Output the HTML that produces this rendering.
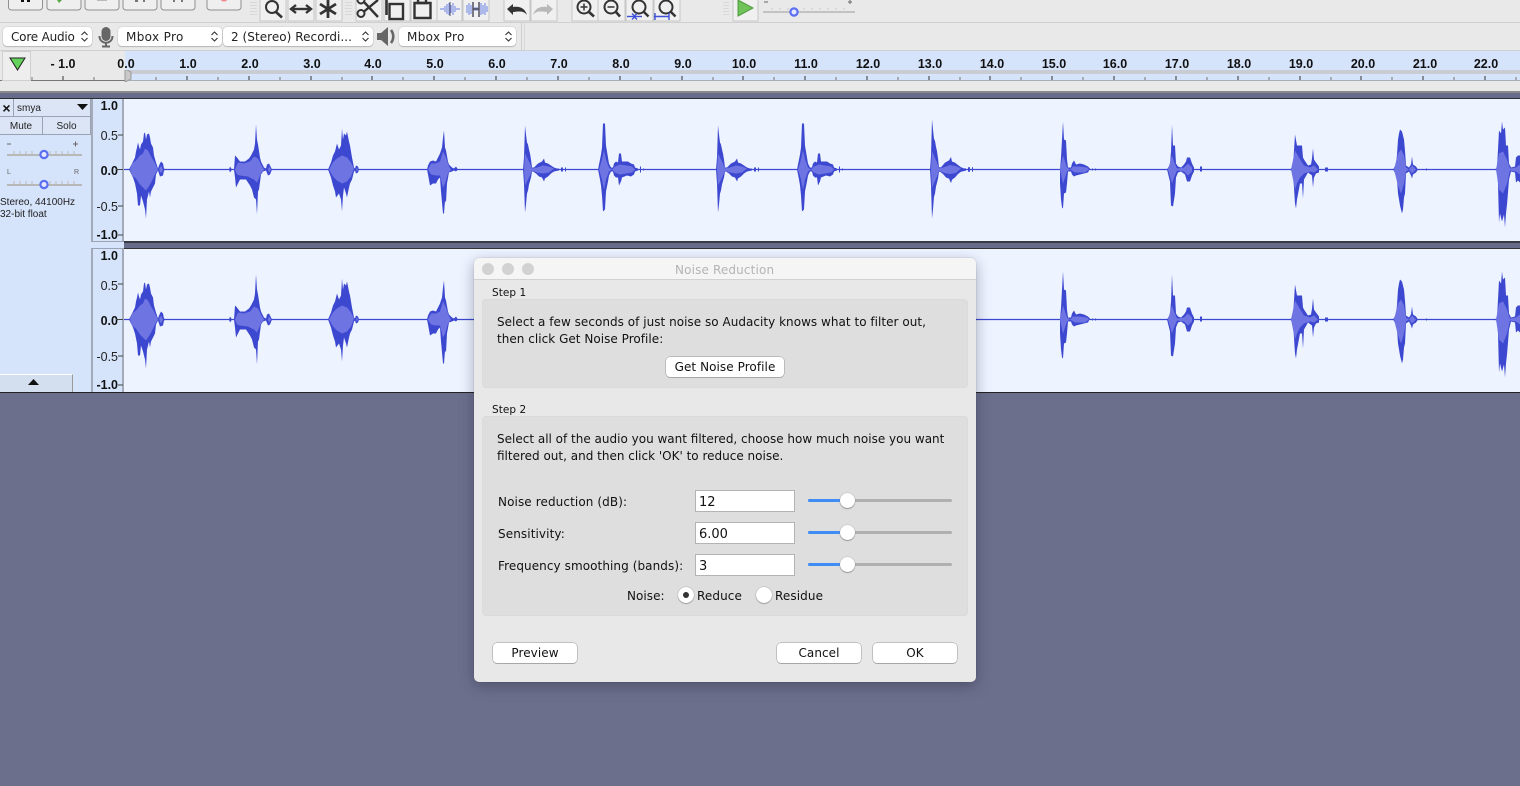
<!DOCTYPE html>
<html><head><meta charset="utf-8"><title>Noise Reduction</title>
<style>
html,body{margin:0;padding:0}
body{width:1520px;height:786px;position:relative;overflow:hidden;background:#6b6f8c;font-family:"DejaVu Sans","Liberation Sans",sans-serif;color:#111}
.a{position:absolute}
.sel{position:absolute;top:27px;height:19px;background:#fff;border-radius:4px;box-shadow:0 0 1px #999,0 1px 1px #bbb;font-size:12px;line-height:20px;padding-left:8px;box-sizing:border-box;white-space:nowrap;color:#222}
.sel svg{position:absolute;right:3px;top:3px}
.rl{position:absolute;top:57px;font:bold 12.5px "Liberation Sans",sans-serif;color:#111;transform:translateX(-50%);white-space:nowrap}
.vr{position:absolute;width:27px;left:91px;text-align:right;font:12.5px/14px "Liberation Sans",sans-serif;color:#222}
.vr.b{font-weight:bold;color:#111}
.t{position:absolute;font-size:12px;line-height:15px;white-space:nowrap;color:#111;letter-spacing:.05px}
.btn{position:absolute;background:#fff;border-radius:4px;box-shadow:0 0 0 .5px #999,0 1px 0 #b5b5b5;font-size:12px;letter-spacing:.07px;line-height:20px;text-align:center;color:#111;height:20px}
.inp{position:absolute;left:695px;width:100px;height:22px;box-sizing:border-box;background:#fff;border:1px solid #b4b4b4;font-size:13px;line-height:24px;padding-left:3px;color:#111}
.track{position:absolute;left:808px;width:144px;height:3px;background:#b0b0b0;border-radius:2px}
.track i{position:absolute;left:0;top:0;width:34px;height:3px;background:#3f8cf5;border-radius:2px}
.thumb{position:absolute;left:840px;width:15px;height:15px;border-radius:50%;background:#fff;box-shadow:0 0 1px #777,0 1px 1px #999}
.radio{position:absolute;width:16px;height:16px;border-radius:50%;background:#fff;box-shadow:0 0 1px #666,0 1px 1px #aaa}
.group{position:absolute;left:482px;width:486px;background:#dedede;border:1px solid #dadada;box-sizing:border-box;border-radius:4px}
.pb{position:absolute;background:#dbe5f6;border-right:1px solid #9aa3b5;border-bottom:1px solid #9aa3b5;box-sizing:border-box;font:10px/18px "Liberation Sans",sans-serif;text-align:center;color:#222}
</style></head><body>

<!-- toolbars background -->
<div class="a" style="left:0;top:0;width:1520px;height:93px;background:#e9e9e9"></div>
<div class="a" style="left:0;top:22px;width:1520px;height:1px;background:#d0d0d0"></div>
<div class="a" style="left:521px;top:23px;width:1px;height:27px;background:#cfcfcf"></div>
<div class="a" style="left:524px;top:23px;width:1px;height:27px;background:#d8d8d8"></div>
<div class="a" style="left:0;top:50px;width:1520px;height:1px;background:#d0d0d0"></div>

<svg class="a" style="left:0;top:0" width="1520" height="23" viewBox="0 0 1520 23">
<g fill="#efefef" stroke="#8f8f8f" stroke-width="1">
<rect x="8.500" y="-8" width="34" height="18" rx="3"/><rect x="47" y="-8" width="34" height="18" rx="3"/><rect x="85" y="-8" width="34" height="18" rx="3"/><rect x="123" y="-8" width="34" height="18" rx="3"/><rect x="161" y="-8" width="34" height="18" rx="3"/><rect x="207" y="-8" width="34" height="18" rx="3"/>
</g>
<rect x="21" y="0" width="3" height="2" fill="#111"/><rect x="27" y="0" width="3" height="2" fill="#111"/>
<path d="M57 0h5l-3 3z" fill="#5aa845"/><rect x="97" y="0" width="10" height="1" fill="#bbb"/>
<path d="M135 0h3v2h-3zM143 0h2v2h-2z" fill="#777"/><path d="M173 0h2v2h-2zM181 0h2v2h-2z" fill="#777"/>
<ellipse cx="224" cy="0" rx="3" ry="1.500" fill="#ef8a8a"/>
<g fill="#d8d8d8"><rect x="250" y="2" width="7" height="1"/><rect x="250" y="5" width="7" height="1"/><rect x="250" y="8" width="7" height="1"/><rect x="250" y="11" width="7" height="1"/><rect x="250" y="14" width="7" height="1"/><rect x="345" y="2" width="7" height="1"/><rect x="345" y="5" width="7" height="1"/><rect x="345" y="8" width="7" height="1"/><rect x="345" y="11" width="7" height="1"/><rect x="345" y="14" width="7" height="1"/><rect x="723" y="2" width="6" height="1"/><rect x="723" y="5" width="6" height="1"/><rect x="723" y="8" width="6" height="1"/><rect x="723" y="11" width="6" height="1"/><rect x="723" y="14" width="6" height="1"/></g>
<g fill="#f0f0f0" stroke="#c6c6c6">
<rect x="260" y="-4" width="26" height="25"/><rect x="288" y="-4" width="26" height="25"/><rect x="316" y="-4" width="26" height="25"/>
<rect x="356" y="-4" width="26" height="25"/><rect x="384" y="-4" width="26" height="25"/><rect x="411" y="-4" width="26" height="25"/><rect x="437" y="-4" width="25" height="25"/><rect x="463" y="-4" width="26" height="25"/>
<rect x="504" y="-4" width="26" height="25"/><rect x="531" y="-4" width="26" height="25"/>
<rect x="572" y="-4" width="26" height="25"/><rect x="598" y="-4" width="27" height="25"/><rect x="626" y="-4" width="27" height="25"/><rect x="654" y="-4" width="26" height="25"/>
<rect x="733" y="-4" width="25" height="25"/>
</g>
<g fill="none" stroke="#333" stroke-width="2">
<circle cx="272" cy="7" r="6"/><path d="M276 12l6 5.500" stroke-width="2.600"/>
<path d="M293 9h16" stroke-width="2.400"/><path d="M296 5l-5 4 5 4M306 5l5 4-5 4" stroke-width="2.400"/>
<path d="M328 0v18M320 4l16 10M336 4l-16 10" stroke-width="2.800"/>
<circle cx="361" cy="13.500" r="3.500"/><circle cx="361" cy="0" r="3.500"/><path d="M364 11.500L378 0M364 2L378 17" stroke-width="2.400"/>
<path d="M386.500 0v15" stroke-width="2.600"/><rect x="389.500" y="4" width="13.500" height="15" stroke-width="2.400"/>
<path d="M414.500 3v15h16v-15z" stroke-width="2.400"/><path d="M418 -1v4h8v-4" stroke-width="2.400"/>
<circle cx="584" cy="7" r="6.500"/><path d="M589 12l5 4.500" stroke-width="2.600"/><path d="M580.500 7h7M584 3.500v7" stroke-width="1.500"/>
<circle cx="611" cy="7" r="6.500"/><path d="M616 12l4 4.500" stroke-width="2.600"/><path d="M607.500 7h7" stroke-width="1.500"/>
<circle cx="639" cy="7" r="6.500"/><path d="M644 12l4.500 4.500" stroke-width="2.400"/>
<circle cx="666" cy="7" r="6.500"/><path d="M671 12l4.500 4.500" stroke-width="2.400"/>
</g>
<path d="M507 9l6-5v3c8-1 12 2 14 8-3-4-7-4-14-3v3z" fill="#333"/>
<path d="M553 9l-6-5v3c-8-1-12 2-14 8 3-4 7-4 14-3v3z" fill="#b8b8b8"/>
<g stroke="#3e50d8" stroke-width="1.400" fill="none"><path d="M627 16.500h15"/><path d="M632 13.500l3 3-3 3M637 13.500l-3 3 3 3"/><path d="M654 16.500h15M655 13v7M669 13v7"/></g>
<g stroke="#6a82e4" fill="none" stroke-width="1"><path d="M440 9h4M456 9h4M445 6v6M447 4v10M449 3v12M451 5v8M453 3v12M455 6v6"/><path d="M467 5v8M469 3v12M471 5v9M475 7v4M477 7v4M481 3v12M483 5v9M485 3v12M487 6v6"/></g>
<path d="M450 2v14" stroke="#667" stroke-width="1.200"/><path d="M473 2v15M479 2v15M473 9h6" stroke="#445" stroke-width="1.400" fill="none"/>
<path d="M738 0v16l15-8z" fill="#6fc35a" stroke="#4f9a3f"/>
<path d="M763 12h92" stroke="#c2c2c2" stroke-width="2"/><path d="M764 2h4" stroke="#666"/><path d="M848 2h4M850 0v4" stroke="#666"/>
<g stroke="#ccc"><path d="M772 8v2M780 8v2M788 8v2M804 8v2M812 8v2M820 8v2M828 8v2M836 8v2M844 8v2"/></g>
<circle cx="794" cy="12" r="3.600" fill="#e6e8ff" stroke="#5b6ff0" stroke-width="2.200"/>
</svg>

<!-- selectors -->
<div class="sel" style="left:3px;width:89px;letter-spacing:-.2px">Core Audio<svg width="9" height="13"><path d="M1.500 5L4.500 2L7.500 5M1.500 8L4.500 11L7.500 8" fill="none" stroke="#333" stroke-width="1.100"/></svg></div>
<div class="sel" style="left:118px;width:104px;letter-spacing:.35px">Mbox Pro<svg width="9" height="13"><path d="M1.500 5L4.500 2L7.500 5M1.500 8L4.500 11L7.500 8" fill="none" stroke="#333" stroke-width="1.100"/></svg></div>
<div class="sel" style="left:223px;width:150px;letter-spacing:.05px">2 (Stereo) Recordi...<svg width="9" height="13"><path d="M1.500 5L4.500 2L7.500 5M1.500 8L4.500 11L7.500 8" fill="none" stroke="#333" stroke-width="1.100"/></svg></div>
<div class="sel" style="left:399px;width:117px;letter-spacing:.35px">Mbox Pro<svg width="9" height="13"><path d="M1.500 5L4.500 2L7.500 5M1.500 8L4.500 11L7.500 8" fill="none" stroke="#333" stroke-width="1.100"/></svg></div>
<svg class="a" style="left:98px;top:26px" width="16" height="22"><rect x="3.500" y="1" width="9" height="14" rx="4.500" fill="#666"/><path d="M1.500 10c0 9 13 9 13 0M8 16v4M4 20.500h8" fill="none" stroke="#666" stroke-width="2"/></svg>
<svg class="a" style="left:376px;top:25px" width="22" height="23"><path d="M1 8h4l7-6v19l-7-6H1z" fill="#666"/><path d="M15 5c3 4 3 9 0 13" fill="none" stroke="#666" stroke-width="2.600"/></svg>

<!-- ruler -->
<div class="a" style="left:125px;top:51px;width:1395px;height:29px;background:#d5e3fb"></div>
<div class="a" style="left:125px;top:70px;width:1395px;height:4px;background:#c9ccd2"></div>
<div class="a" style="left:0;top:80px;width:125px;height:1px;background:#777"></div>
<div class="a" style="left:125px;top:80px;width:1395px;height:1px;background:#a7aeba"></div>
<div class="a" style="left:0;top:91px;width:1520px;height:2px;background:#8a8a8a"></div>
<div class="a" style="left:3px;top:52px;width:27px;height:28px;background:#eee;box-shadow:0 0 0 1px #cfcfcf;box-sizing:border-box"></div>
<svg class="a" style="left:9px;top:57px" width="18" height="16"><path d="M1 1h15L8.500 13z" fill="#63d35c" stroke="#222" stroke-width="1"/></svg>
<span class="rl" style="left:63px">- 1.0</span><span class="rl" style="left:126px">0.0</span><span class="rl" style="left:188px">1.0</span><span class="rl" style="left:250px">2.0</span><span class="rl" style="left:312px">3.0</span><span class="rl" style="left:373px">4.0</span><span class="rl" style="left:435px">5.0</span><span class="rl" style="left:497px">6.0</span><span class="rl" style="left:559px">7.0</span><span class="rl" style="left:621px">8.0</span><span class="rl" style="left:683px">9.0</span><span class="rl" style="left:744px">10.0</span><span class="rl" style="left:806px">11.0</span><span class="rl" style="left:868px">12.0</span><span class="rl" style="left:930px">13.0</span><span class="rl" style="left:992px">14.0</span><span class="rl" style="left:1054px">15.0</span><span class="rl" style="left:1115px">16.0</span><span class="rl" style="left:1177px">17.0</span><span class="rl" style="left:1239px">18.0</span><span class="rl" style="left:1301px">19.0</span><span class="rl" style="left:1363px">20.0</span><span class="rl" style="left:1425px">21.0</span><span class="rl" style="left:1486px">22.0</span>
<svg class="a" style="left:0;top:70px" width="1520" height="12">
<path d="M63 6v4M187 6v4M249 6v4M311 6v4M372 6v4M434 6v4M496 6v4M558 6v4M620 6v4M682 6v4M743 6v4M805 6v4M867 6v4M929 6v4M990 6v4M1052 6v4M1114 6v4M1176 6v4M1238 6v4M1300 6v4M1361 6v4M1423 6v4M1485 6v4" stroke="#333"/>
<path d="M32 7v3M94 7v3M156 7v3M218 7v3M280 7v3M342 7v3M403 7v3M465 7v3M527 7v3M589 7v3M651 7v3M713 7v3M774 7v3M836 7v3M898 7v3M960 7v3M1021 7v3M1083 7v3M1145 7v3M1207 7v3M1269 7v3M1331 7v3M1392 7v3M1454 7v3M1516 7v3" stroke="#777"/>
<path d="M125 -1l6 3v7l-6 3z" fill="#c8c8c8" stroke="#999"/>
</svg>

<!-- tracks -->
<div class="a" style="left:0;top:93px;width:1520px;height:5px;background:#676c8a"></div>
<div class="a" style="left:0;top:98px;width:1520px;height:1px;background:#2c2c34"></div>
<div class="a" style="left:0;top:99px;width:91px;height:293px;background:#d5e3fb"></div>
<div class="a" style="left:91px;top:99px;width:33px;height:293px;background:#d5e3fb"></div>
<div class="a" style="left:91px;top:99px;width:2px;height:293px;background:#a3abba"></div>
<div class="a" style="left:122px;top:99px;width:2px;height:293px;background:#a3abba"></div>
<div class="a" style="left:124px;top:99px;width:1396px;height:143px;background:#edf3ff"></div>
<div class="a" style="left:124px;top:249px;width:1396px;height:143px;background:#edf3ff"></div>
<div class="a" style="left:124px;top:241px;width:1396px;height:8px;background:#676c8a;border-top:2px solid #3a3a44;border-bottom:1px solid #333;box-sizing:border-box"></div>
<div class="a" style="left:91px;top:241px;width:33px;height:8px;background:#d5e3fb;border-top:1px solid #9ba3b4;border-bottom:1px solid #9ba3b4;box-sizing:border-box"></div>
<div class="a" style="left:0;top:392px;width:1520px;height:1px;background:#222"></div>

<svg class="a" style="left:0;top:0" width="1520" height="400" viewBox="0 0 1520 400">
<defs>
<style>.o{fill:#3d48d0}.n{fill:#6e75e2}</style>
<g id="s5"><path class="o" d="M0 0L1-12 2-44 3-35 4-27 5-25 6-20 7-16 8-10 9-2 11-2 13-4 15-6 17-7 19-8 21-11 22-7 25-6 28-4 31-2 34-1 36-1 36 1 31 2 28 4 25 7 22 9 21 12 19 8 16 7 13 4 10 2 9 2 8 8 6 15 5 21 4 24 3 35 2 43 1 14Z"/><path class="n" d="M1 0L2-16 4-12 7-6 9-1 14-2 20-4 26-3 31-1 26 3 20 4 14 3 9 1 7 6 4 12 2 16Z"/><path class="o" d="M38-2h2V2h-2zM42-2h1V2h-1z"/></g>
<g id="s6"><path class="o" d="M0 0L2-10 3-15 4-22 5-46 7-46 8-24 10-12 11-6 13-2 15-2 16-6 18-8 20-7 21-16 23-16 24-8 27-8 30-8 33-6 36-5 37-2 40-1 40 1 37 2 36 5 33 7 29 6 24 8 23 12 21 16 20 8 18 8 16 6 15 2 13 2 11 6 10 12 8 22 7 40 5 42 4 26 3 16 2 10Z"/><path class="n" d="M1 0L4-10 6-19 8-10 11-2 14 0 17-3 22-5 28-4 34-3 37 0 34 3 28 4 22 5 17 3 14 0 11 2 8 10 6 20 4 10Z"/><path class="o" d="M42-3h1V3h-1zM45-1h1V1h-1z"/></g>
<g id="w">
<path d="M124-.6H1520V.6H124Z" class="o"/>
<path class="o" d="M129 0L131-4 133-8 135-12 136-18 137-22 138-27 139-23 140-20 141-25 143-28 144-36 145-37 146-30 147-35 149-36 150-32 151-26 153-22 154-14 156-7 158-1 159-4 161-8 163-6 164-1 166 0 164 1 163 6 160 7 158 1 156 5 155 14 153 18 151 22 150 28 149 22 147 30 146 49 145 40 143 32 141 26 140 36 138 36 137 24 135 14 133 8 131 4Z"/>
<path class="n" d="M130 0L132-6 136-9 140-14 143-16 145-21 148-19 151-13 154-8 157-2 158 0 156 3 153 9 150 15 146 21 143 18 140 15 136 9 132 6ZM159 0L161-4 163 0 161 4Z"/>
<path class="o" d="M229 0L230-3 232 0 230 3ZM234 0L235-14 237-12 240-8 245-8 249-11 251-14 254-20 255-26 256-45 257-30 258-25 260-12 261-8 264-2 266-1 267-5 269-6 271-2 272 0 270 5 268 6 266 1 263 2 261 5 259 20 258 22 257 45 256 30 254 28 252 20 250 16 246 10 240 10 238 14 236 18 235 8Z"/>
<path class="n" d="M235 0L238-7 244-6 250-8 254-13 258-11 262-3 264 0 261 4 257 13 254 10 248 7 240 6 237 5ZM268 0L269-3 271 0 269 3Z"/>
<path class="o" d="M328 0L331-7 333-14 335-18 337-26 339-20 341-24 342-41 343-30 344-36 346-34 347-38 349-28 350-24 352-12 354-2 355-1 356-4 358-3 359 0 358 3 356 4 355 1 354 2 352 10 350 14 349 18 347 28 346 24 344 18 343 26 342 42 341 30 339 24 336 28 335 22 333 16 331 8Z"/>
<path class="n" d="M329 0L333-7 337-11 342-14 347-12 351-7 354-1 351 7 347 12 342 14 337 11 333 7ZM356 0L357-2 358 0 357 2Z"/>
<path class="o" d="M427 0L428-4 430-8 433-9 436-8 438-12 440-16 442-22 443-32 444-39 445-22 446-19 448-8 449-5 452-2 454-1 456-3 458 0 456 2 454 1 452 2 449 3 447 14 446 33 445 31 444 44 443 44 441 22 440 8 438 10 436 14 433 14 430 16 428 5Z"/>
<path class="n" d="M428 0L431-6 436-6 440-8 443-18 446-12 449-3 451 0 448 4 445 14 443 18 440 6 436 6 431 5Z"/>
<use href="#s5" x="523"/><use href="#s6" x="598"/><use href="#s5" x="716"/><use href="#s6" x="797"/>
<g transform="translate(930,0) scale(1,1.14)"><use href="#s5"/></g>
<path class="o" d="M1060 0L1061-12 1062-30 1063-48 1064-30 1066-29 1067-10 1068-2 1071-2 1072-6 1074-9 1076-5 1080-6 1084-5 1088-3 1090-1 1088 3 1084 4 1080 5 1076 6 1074 7 1072 5 1071 2 1068 2 1067 14 1066 23 1064 24 1063 39 1062 38 1061 30 1060 14Z"/>
<path class="n" d="M1060 0L1063-14 1065-8 1067-2 1070 0 1073-3 1080-3 1087-2 1089 0 1085 3 1075 3 1070 0 1067 2 1065 8 1063 14Z"/>
<path class="o" d="M1092-1h1V1h-1zM1095-1h1V1h-1z"/>
<path class="o" d="M1167 0L1170-5 1171-18 1172-45 1173-24 1175-24 1176-6 1178-3 1181-2 1184-5 1186-8 1187-12 1190-12 1192-6 1194-2 1194 2 1192 6 1190 12 1187 12 1185 5 1181 2 1178 3 1176 8 1175 24 1173 37 1171 36 1170 12Z"/>
<path class="n" d="M1168 0L1172-14 1174-8 1177-1 1184-2 1188-6 1192-2 1192 2 1188 6 1184 2 1177 1 1174 8 1172 14Z"/>
<path class="o" d="M1200-3h2V2h-2z"/>
<path class="o" d="M1290 0L1293-3 1295-35 1297-24 1302-24 1303-12 1304-10 1308-4 1311-5 1312-11 1313-21 1314-10 1316-7 1319-3 1319 3 1316 4 1314 8 1313 18 1312 6 1308 3 1304 10 1303 29 1302 14 1300 14 1297 30 1296 39 1295 34 1293 3Z"/>
<path class="n" d="M1291 0L1295-19 1299-12 1304-4 1310-2 1314-4 1318 0 1314 3 1310 2 1304 4 1300 8 1297 14 1295 20Z"/>
<path class="o" d="M1325-2h3V2h-3z"/>
<path class="o" d="M1393 0L1396-5 1397-15 1398-30 1399-36 1400-40 1402-38 1404-30 1405-19 1406-4 1409-2 1411-5 1412-13 1413-5 1416-3 1418 0 1416 3 1413 5 1412 9 1411 6 1409 2 1406 4 1405 24 1404 28 1403 40 1402 44 1400 36 1398 24 1397 10 1396 5Z"/>
<path class="n" d="M1394 0L1398-16 1401-20 1404-14 1406-2 1409 0 1412-4 1416 0 1412 4 1409 0 1406 2 1404 14 1401 24 1398 16Z"/>
<path class="o" d="M1426-1h1V1h-1z"/>
<path class="o" d="M1495 0L1497-2 1498-20 1499-39 1501-36 1502-48 1503-40 1505-42 1506-24 1508-24 1509-6 1511-2 1515-3 1516-12 1518-14 1520-14V13L1518 11 1516 13 1515 3 1511 2 1509 10 1508 23 1507 35 1506 44 1505 58 1504 45 1502 52 1500 44 1499 53 1498 14 1497 2Z"/>
<path class="n" d="M1496 0L1499-16 1503-18 1507-10 1510-1 1516-2 1520-5V5L1516 2 1510 1 1507 14 1503 24 1499 20Z"/>
</g>
</defs>
<use href="#w" y="169.500"/>
<use href="#w" y="319.500"/>
</svg>

<!-- v ruler -->
<div class="vr b" style="top:99px">1.0</div><div class="vr" style="top:129px">0.5</div><div class="vr b" style="top:164px">0.0</div><div class="vr" style="top:200px">-0.5</div><div class="vr b" style="top:228px">-1.0</div>
<div class="vr b" style="top:249px">1.0</div><div class="vr" style="top:279px">0.5</div><div class="vr b" style="top:314px">0.0</div><div class="vr" style="top:350px">-0.5</div><div class="vr b" style="top:378px">-1.0</div>
<svg class="a" style="left:115px;top:99px" width="8" height="294"><path d="M3 36h5M1 70.500h7M3 107h5M3 136h5M3 185h5M1 220.500h7M3 257h5M3 286h5" stroke="#444"/></svg>

<!-- track panel -->
<div class="pb" style="left:0;top:99px;width:14px;height:18px;font-weight:bold;font-size:14px;color:#111">×</div>
<div class="pb" style="left:14px;top:99px;width:77px;height:18px;text-align:left;padding-left:3px;line-height:19px">smya</div>
<svg class="a" style="left:77px;top:104px" width="12" height="8"><path d="M0 0h11L5.500 6z" fill="#111"/></svg>
<div class="pb" style="left:0;top:117px;width:43px;height:18px;line-height:19px">Mute</div>
<div class="pb" style="left:43px;top:117px;width:48px;height:18px;line-height:19px">Solo</div>
<svg class="a" style="left:0;top:136px" width="91" height="56">
<path d="M7 19h75M7 49h75" stroke="#b8b8b8" stroke-width="2"/>
<path d="M7 8h4M73 8h5M75.500 5.500v5" stroke="#666"/>
<text x="7" y="38" font-size="7" font-family="Liberation Sans" fill="#666">L</text><text x="74" y="38" font-size="7" font-family="Liberation Sans" fill="#666">R</text>
<path d="M14 15v3M20 15v3M26 15v3M32 15v3M50 15v3M56 15v3M62 15v3M68 15v3M74 15v3M14 45v3M20 45v3M26 45v3M32 45v3M50 45v3M56 45v3M62 45v3M68 45v3M74 45v3" stroke="#bbb"/>
<circle cx="44" cy="18.500" r="3.600" fill="#e6e8ff" stroke="#5b6ff0" stroke-width="2.200"/>
<circle cx="44" cy="48.500" r="3.600" fill="#e6e8ff" stroke="#5b6ff0" stroke-width="2.200"/>
</svg>
<div class="a" style="left:0;top:197px;font:10px/12px 'Liberation Sans',sans-serif;color:#222;white-space:nowrap">Stereo, 44100Hz<br>32-bit float</div>
<div class="a" style="left:0;top:374px;width:73px;height:18px;background:#d3dfef;border-top:1px solid #fff;border-right:1px solid #999;box-sizing:border-box"></div>
<svg class="a" style="left:28px;top:379px" width="12" height="8"><path d="M0 6h11L5.500 0z" fill="#111"/></svg>

<!-- dialog -->
<div class="a" style="left:474px;top:258px;width:502px;height:424px;background:#e8e8e8;border-radius:5px;box-shadow:0 4px 14px rgba(30,30,50,.35),0 0 1px rgba(0,0,0,.3)"></div>
<div class="a" style="left:474px;top:258px;width:502px;height:22px;background:#f5f5f5;border-radius:5px 5px 0 0;border-bottom:1px solid #d2d2d2;box-sizing:border-box"></div>
<div class="a" style="left:482px;top:263px;width:12px;height:12px;border-radius:50%;background:#d2d2d2"></div>
<div class="a" style="left:502px;top:263px;width:12px;height:12px;border-radius:50%;background:#d2d2d2"></div>
<div class="a" style="left:522px;top:263px;width:12px;height:12px;border-radius:50%;background:#d2d2d2"></div>
<div class="t" style="left:675px;top:263px;color:#b4b4b4;letter-spacing:.14px">Noise Reduction</div>
<div class="t" style="left:492px;top:286px;font-size:10.500px">Step 1</div>
<div class="group" style="top:299px;height:89px"></div>
<div class="t" style="left:497px;top:315px;letter-spacing:.03px">Select a few seconds of just noise so Audacity knows what to filter out,</div>
<div class="t" style="left:497px;top:332px;letter-spacing:.03px">then click Get Noise Profile:</div>
<div class="btn" style="left:666px;top:357px;width:118px">Get Noise Profile</div>
<div class="t" style="left:492px;top:403px;font-size:10.500px">Step 2</div>
<div class="group" style="top:416px;height:200px"></div>
<div class="t" style="left:497px;top:432px;letter-spacing:0">Select all of the audio you want filtered, choose how much noise you want</div>
<div class="t" style="left:497px;top:449px;letter-spacing:0">filtered out, and then click 'OK' to reduce noise.</div>
<div class="t" style="left:498px;top:495px;letter-spacing:.1px">Noise reduction (dB):</div>
<div class="t" style="left:498px;top:527px;letter-spacing:.1px">Sensitivity:</div>
<div class="t" style="left:498px;top:559px;letter-spacing:.08px">Frequency smoothing (bands):</div>
<div class="inp" style="top:490px">12</div><div class="inp" style="top:522px">6.00</div><div class="inp" style="top:554px">3</div>
<div class="track" style="top:499px"><i></i></div><div class="track" style="top:531px"><i></i></div><div class="track" style="top:563px"><i></i></div>
<div class="thumb" style="top:493px"></div><div class="thumb" style="top:525px"></div><div class="thumb" style="top:557px"></div>
<div class="t" style="left:627px;top:589px">Noise:</div>
<div class="radio" style="left:678px;top:587px"></div>
<div class="a" style="left:683px;top:592px;width:6px;height:6px;border-radius:50%;background:#333"></div>
<div class="t" style="left:697px;top:589px;letter-spacing:.1px">Reduce</div>
<div class="radio" style="left:756px;top:587px"></div>
<div class="t" style="left:775px;top:589px;letter-spacing:.1px">Residue</div>
<div class="btn" style="left:493px;top:643px;width:84px">Preview</div>
<div class="btn" style="left:777px;top:643px;width:84px">Cancel</div>
<div class="btn" style="left:873px;top:643px;width:84px">OK</div>
</body></html>
